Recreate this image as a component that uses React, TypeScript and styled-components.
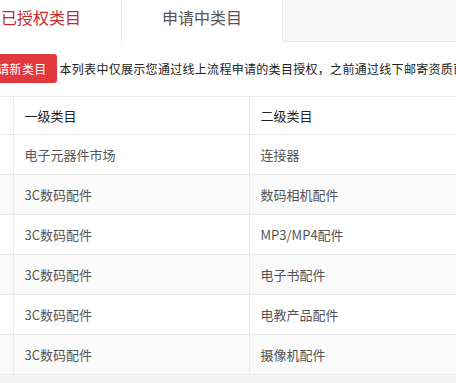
import React, { useState } from "react";
import styled, { createGlobalStyle } from "styled-components";

const GlobalStyle = createGlobalStyle`
  html, body {
    margin: 0;
    padding: 0;
    background: #f4f4f4;
    overflow: hidden;
  }
  body {
    font-family: "Noto Sans CJK SC", "Microsoft YaHei", sans-serif;
  }
`;

const rows = [
  { first: "电子元器件市场", second: "连接器" },
  { first: "3C数码配件", second: "数码相机配件" },
  { first: "3C数码配件", second: "MP3/MP4配件" },
  { first: "3C数码配件", second: "电子书配件" },
  { first: "3C数码配件", second: "电教产品配件" },
  { first: "3C数码配件", second: "摄像机配件" },
];

const tabs = ["已授权类目", "申请中类目"];

const App: React.FC = () => {
  const [active, setActive] = useState<number>(0);

  return (
    <>
      <GlobalStyle />
      <Viewport>
        <Page>
          <TabBar>
            {tabs.map((t, i) => (
              <Tab key={t} active={i === active} onClick={() => setActive(i)}>
                {t}
              </Tab>
            ))}
          </TabBar>

          <Content>
            <Toolbar>
              <ApplyButton>申请新类目</ApplyButton>
              <Notice>
                本列表中仅展示您通过线上流程申请的类目授权，之前通过线下邮寄资质已
              </Notice>
            </Toolbar>

            <Table>
              <colgroup>
                <col style={{ width: 36 }} />
                <col style={{ width: 236 }} />
                <col />
              </colgroup>
              <thead>
                <tr>
                  <IndexCell as="th" />
                  <HeadCell>一级类目</HeadCell>
                  <HeadCell>二级类目</HeadCell>
                </tr>
              </thead>
              <tbody>
                {rows.map((r, i) => (
                  <Row key={i} striped={i % 2 === 1}>
                    <IndexCell />
                    <Cell>{r.first}</Cell>
                    <Cell>{r.second}</Cell>
                  </Row>
                ))}
              </tbody>
            </Table>
          </Content>
        </Page>
      </Viewport>
    </>
  );
};

export default App;

const Viewport = styled.div`
  width: 100%;
  overflow: hidden;
`;

const Page = styled.div`
  width: 760px;
  margin-left: -39px;
`;

const TabBar = styled.div`
  display: flex;
  height: 42px;
  background: #f8f8f8;
  border-bottom: 1px solid #e6e6e6;
  box-sizing: border-box;
`;

const Tab = styled.div<{ active: boolean }>`
  width: 161px;
  height: 42px;
  line-height: 34px;
  text-align: center;
  font-size: 16px;
  background: #fff;
  border-right: 1px solid #ececec;
  box-sizing: border-box;
  color: ${(props) => (props.active ? "#c3282e" : "#555")};
  cursor: pointer;
`;

const Content = styled.div`
  background: #fff;
  padding: 12px 0 0 16px;
`;

const Toolbar = styled.div`
  display: flex;
  align-items: center;
  gap: 3px;
  height: 29px;
`;

const ApplyButton = styled.button`
  height: 29px;
  padding: 0 10px 0 11px;
  margin-left: -3px;
  border: none;
  border-radius: 3px;
  background: #e1393d;
  color: #fff;
  font-family: inherit;
  font-size: 12px;
  letter-spacing: 0.3px;
  cursor: pointer;
  flex-shrink: 0;
`;

const Notice = styled.span`
  font-size: 12px;
  letter-spacing: 0.3px;
  color: #222;
  white-space: nowrap;
`;

const Table = styled.table`
  margin-top: 13px;
  border-collapse: collapse;
  width: 744px;
  table-layout: fixed;
  border-top: 1px solid #ececec;
`;

const IndexCell = styled.td`
  padding: 0;
  border-right: 1px solid #ececec;
  border-bottom: 1px solid #ececec;
`;

const HeadCell = styled.th`
  height: 37px;
  padding: 0 0 0 11px;
  text-align: left;
  font-weight: normal;
  font-size: 13px;
  color: #222;
  border-right: 1px solid #ececec;
  border-bottom: 1px solid #ececec;
`;

const Row = styled.tr<{ striped: boolean }>`
  background: ${(props) => (props.striped ? "#fafafa" : "#fff")};
`;

const Cell = styled.td`
  height: 39px;
  padding: 0 0 0 11px;
  font-size: 13px;
  color: #555;
  border-right: 1px solid #ececec;
  border-bottom: 1px solid #ececec;
`;
